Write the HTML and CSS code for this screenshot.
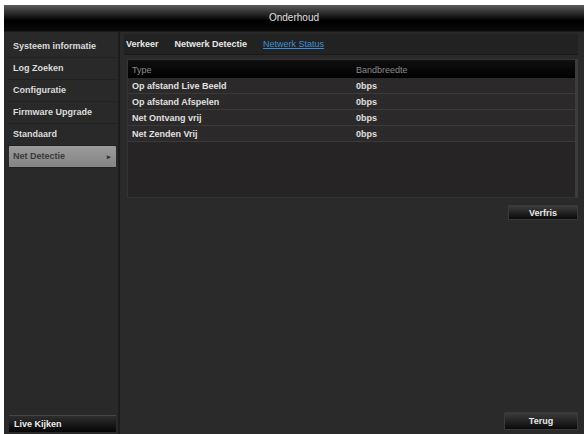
FILE: index.html
```html
<!DOCTYPE html>
<html lang="nl">
<head>
    <meta charset="UTF-8">
    <title>Onderhoud</title>
    <link rel="stylesheet" href="styles.css">
</head>
<body>
    <div class="window">
        <div class="titlebar">Onderhoud</div>
        <div class="main">
            <div class="sidebar">
                <ul class="menu">
                    <li>Systeem informatie</li>
                    <li>Log Zoeken</li>
                    <li>Configuratie</li>
                    <li>Firmware Upgrade</li>
                    <li>Standaard</li>
                    <li class="active">Net Detectie <span class="arrow">&#9656;</span></li>
                </ul>
                <div class="live">Live Kijken</div>
            </div>
            <div class="content">
                <div class="tabs">
                    <span class="tab">Verkeer</span>
                    <span class="tab">Netwerk Detectie</span>
                    <span class="tab current">Netwerk Status</span>
                </div>
                <div class="table-box">
                    <table class="status">
                        <thead>
                            <tr><th>Type</th><th>Bandbreedte</th></tr>
                        </thead>
                        <tbody>
                            <tr><td>Op afstand Live Beeld</td><td>0bps</td></tr>
                            <tr><td>Op afstand Afspelen</td><td>0bps</td></tr>
                            <tr><td>Net Ontvang vrij</td><td>0bps</td></tr>
                            <tr><td>Net Zenden Vrij</td><td>0bps</td></tr>
                        </tbody>
                    </table>
                </div>
                <div class="actions">
                    <button class="btn">Verfris</button>
                </div>
                <div class="footer">
                    <button class="btn back">Terug</button>
                </div>
            </div>
        </div>
    </div>
</body>
</html>
```

FILE: styles.css
```css
body {
    margin: 0;
    padding: 5px 0 0 4px;
    background-color: #ffffff;
    font-family: "Liberation Sans", Arial, sans-serif;
    font-size: 9px;
    color: #e6e6e6;
}
.window {
    height: 429px;
    display: flex;
    flex-direction: column;
    background-color: #2b2a2b;
}
.titlebar {
    height: 26px;
    line-height: 26px;
    text-align: center;
    color: #e0e0e0;
    font-size: 10px;
    background: linear-gradient(#5a5a5a, #262626 35%, #000 60%, #0a0a0a);
    border-bottom: 1px solid #1a1a1a;
}
.main {
    flex: 1;
    display: flex;
}
.sidebar {
    width: 112px;
    display: flex;
    flex-direction: column;
    justify-content: space-between;
    padding: 4px 0 2px 2px;
    border-right: 2px solid #1c1c1c;
    background-color: #2a292a;
}
.menu {
    list-style: none;
    margin: 0;
    padding: 0;
}
.menu li {
    height: 21px;
    line-height: 21px;
    padding-left: 7px;
    font-weight: bold;
    color: #dcdcdc;
    border-bottom: 1px solid #232223;
}
.menu li.active {
    position: relative;
    margin: 0 2px 0 3px;
    padding-left: 4px;
    background: linear-gradient(#9a9a9a, #858585);
    color: #3a3a3a;
    border-radius: 1px;
}
.arrow {
    position: absolute;
    right: 5px;
    font-size: 7px;
    color: #333;
}
.live {
    height: 16px;
    line-height: 16px;
    margin: 0 2px 0 3px;
    padding-left: 5px;
    font-weight: bold;
    color: #ececec;
    background: linear-gradient(#2e2e2e, #050505);
    border-top: 1px solid #444;
}
.content {
    flex: 1;
    display: flex;
    flex-direction: column;
    padding: 2px 6px 4px 4px;
}
.tabs {
    height: 20px;
    line-height: 20px;
    display: flex;
    gap: 16px;
    padding-left: 2px;
    border-bottom: 1px solid #1a1a1a;
    background-color: #232223;
}
.tab {
    font-weight: bold;
    color: #e8e8e8;
}
.tab.current {
    color: #3a8fd8;
    text-decoration: underline;
    font-weight: normal;
}
.table-box {
    margin: 4px 0 0 3px;
    height: 139px;
    background-color: #262425;
    border: 1px solid #333;
    border-right: 3px solid #3c3c3c;
    box-sizing: border-box;
}
.status {
    width: 100%;
    border-collapse: collapse;
}
.status th {
    height: 17px;
    padding: 1px 0 0 4px;
    text-align: left;
    font-weight: normal;
    color: #8a8a8a;
    background: linear-gradient(#101010, #000);
}
.status td {
    height: 15px;
    padding: 0 0 0 4px;
    font-weight: bold;
    color: #e0e0e0;
    border-bottom: 1px solid #3a3a3a;
    background-color: #2b292a;
}
.status th:first-child,
.status td:first-child {
    width: 220px;
}
.actions {
    display: flex;
    justify-content: flex-end;
    margin-top: 7px;
}
.footer {
    margin-top: auto;
    display: flex;
    justify-content: flex-end;
}
.btn {
    width: 70px;
    height: 15px;
    padding: 0;
    font-family: "Liberation Sans", Arial, sans-serif;
    font-size: 9px;
    font-weight: bold;
    color: #e8e8e8;
    border: 1px solid #3a3a3a;
    border-radius: 1px;
    background: linear-gradient(#3c3c3c, #0a0a0a);
}
.btn.back {
    width: 74px;
    height: 18px;
}
```
